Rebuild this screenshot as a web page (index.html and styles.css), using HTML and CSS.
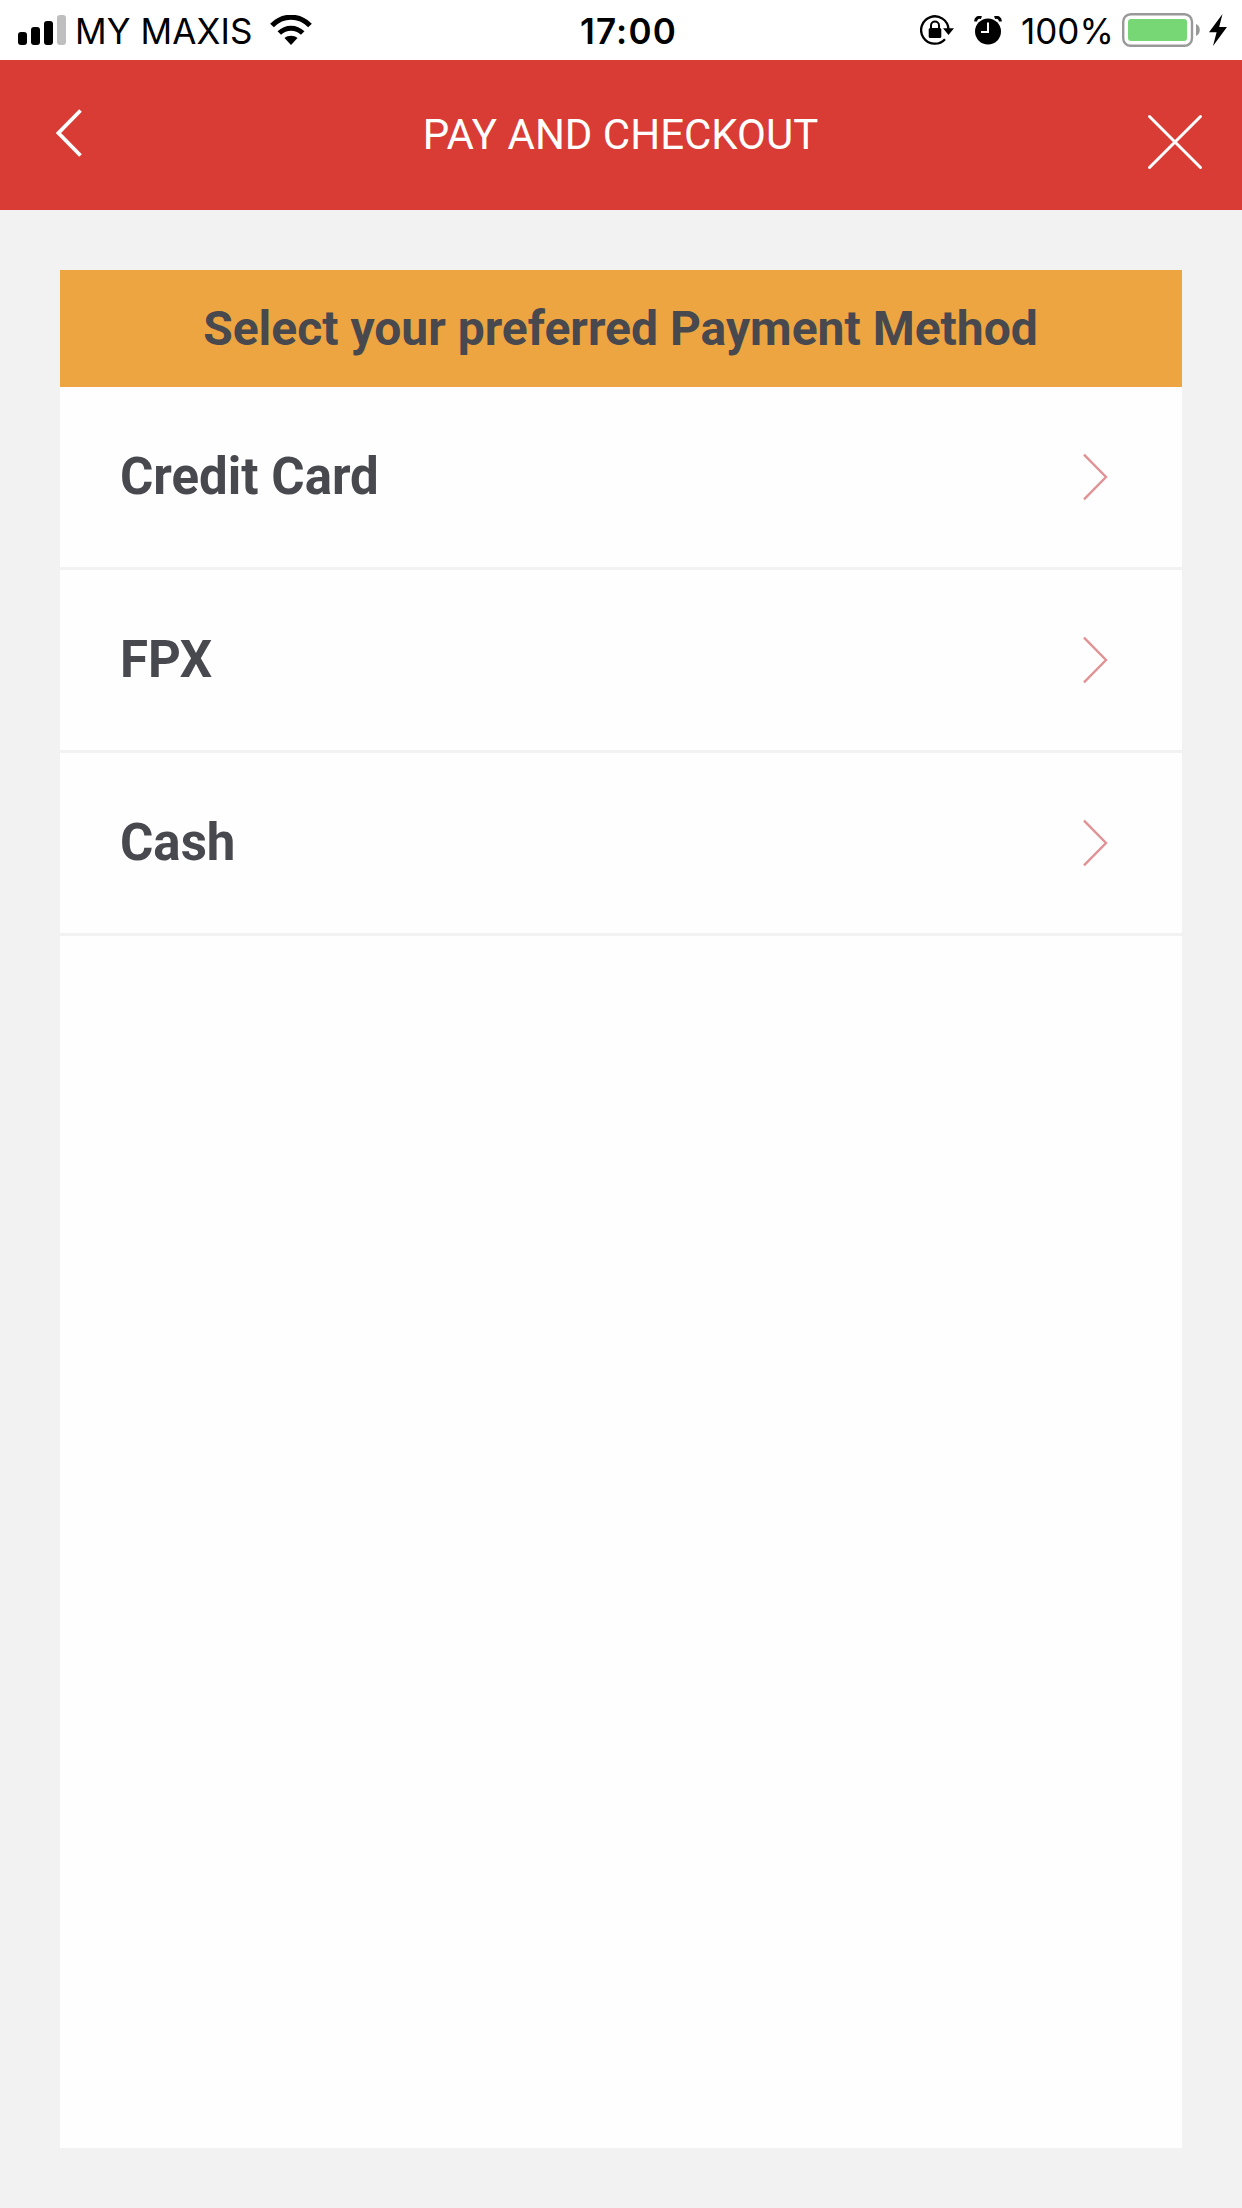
FILE: index.html
```html
<!DOCTYPE html>
<html lang="en">
<head>
  <meta charset="UTF-8" />
  <meta name="viewport" content="width=device-width, initial-scale=1.0"/>
  <title>Pay and Checkout</title>

  <link rel="stylesheet" href="styles.css">
</head>
<body>
  <div class="status-bar">
    <div class="status-left">
      <svg class="signal" width="48" height="30" viewBox="0 0 48 30">
        <rect x="0" y="17" width="9" height="13" rx="3"/>
        <rect x="13" y="12" width="9" height="18" rx="3"/>
        <rect x="26" y="6" width="9" height="24" rx="3"/>
        <rect x="39" y="0" width="9" height="30" rx="3" fill="#bfbfbf"/>
      </svg>
      <span class="carrier">MY MAXIS</span>
      <svg class="wifi" width="42" height="30" viewBox="0 0 42 30">
        <path d="M2 10.5 C13 -.5 29 -.5 40 10.5" fill="none" stroke="#000" stroke-width="5.2"/>
        <path d="M9.3 18 C16 11.5 26 11.5 32.7 18" fill="none" stroke="#000" stroke-width="5"/>
        <path d="M14.5 23 C18 20 24 20 27.5 23 L21 30 Z"/>
      </svg>
    </div>
    <span class="clock">17:00</span>
    <div class="status-right">
      <svg class="lock" width="34" height="30" viewBox="0 0 34 30">
        <path d="M28.5 14 A13.7 13.7 0 1 0 25 24.2" fill="none" stroke="#000" stroke-width="2.3"/>
        <path d="M23 13.3 H34 L28.5 20 Z"/>
        <rect x="8.7" y="13" width="12.6" height="10" rx="1.5"/>
        <path d="M11 14 V10.5 A4 4 0 0 1 19 10.5 V14" fill="none" stroke="#000" stroke-width="2"/>
      </svg>
      <svg class="alarm" width="28" height="29" viewBox="0 0 28 29">
        <circle cx="14" cy="15.5" r="13"/>
        <path d="M1.6 5.4 C1.6 2 4.5 .6 7.4 1.6" fill="none" stroke="#000" stroke-width="3"/>
        <path d="M26.4 5.4 C26.4 2 23.5 .6 20.6 1.6" fill="none" stroke="#000" stroke-width="3"/>
        <path d="M14 6.5 V16 H7" fill="none" stroke="#fff" stroke-width="2"/>
      </svg>
      <span class="percent">100%</span>
      <svg class="battery" width="78" height="34" viewBox="0 0 78 34">
        <rect x="1.2" y="1.2" width="68.8" height="31.6" rx="7.5" fill="#fff" stroke="#999" stroke-width="2.4"/>
        <rect x="6" y="6" width="59" height="22" rx="3" fill="#78d775"/>
        <path d="M74 11 C79 12.5 79 21.5 74 23 Z" fill="#999"/>
      </svg>
      <svg class="bolt" width="18" height="32" viewBox="0 0 18 32">
        <path d="M13.5 0 L0 18.3 H7.6 L4 32 L18 13 H10.2 Z"/>
      </svg>
    </div>
  </div>

  <div class="header">
    <svg class="back" width="26" height="50" viewBox="0 0 26 50">
      <path d="M24.5 2.5 L2.5 25 L24.5 47.5" fill="none" stroke="#fff" stroke-width="3.8"/>
    </svg>
    <h1 class="title">PAY AND CHECKOUT</h1>
    <svg class="close" width="56" height="56" viewBox="0 0 56 56">
      <path d="M2.5 2.5 L53.5 53.5 M53.5 2.5 L2.5 53.5" fill="none" stroke="#fff" stroke-width="3" stroke-linecap="round"/>
    </svg>
  </div>

  <div class="panel">
    <h2 class="banner">Select your preferred Payment Method</h2>
    <div class="method">
      <span>Credit Card</span>
      <svg width="26" height="48" viewBox="0 0 26 48">
        <path d="M2 1.7 L24 24 L2 46.3"/>
      </svg>
    </div>
    <div class="method">
      <span>FPX</span>
      <svg width="26" height="48" viewBox="0 0 26 48">
        <path d="M2 1.7 L24 24 L2 46.3"/>
      </svg>
    </div>
    <div class="method">
      <span>Cash</span>
      <svg width="26" height="48" viewBox="0 0 26 48">
        <path d="M2 1.7 L24 24 L2 46.3"/>
      </svg>
    </div>
  </div>
</body>
</html>
```

FILE: styles.css
```css
* {
  box-sizing: border-box;
  margin: 0;
  padding: 0;
}

body {
  display: flex;
  flex-direction: column;
  height: 100vh;
  background-color: #f2f2f2;
  font-family: Roboto, 'Liberation Sans', sans-serif;
}

svg {
  display: block;
  flex-shrink: 0;
}

/* status bar */
.status-bar {
  display: grid;
  grid-template-columns: 1fr auto 1fr;
  align-items: center;
  height: 60px;
  padding: 0 15px 0 18px;
  background-color: #fff;
  font-family: Inter, 'Liberation Sans', sans-serif;
  font-size: 35px;
  line-height: 56px;
  white-space: nowrap;
}

.status-left,
.status-right {
  display: flex;
  align-items: center;
  height: 60px;
}

.status-right {
  justify-content: flex-end;
}

.carrier {
  width: 195px;
  margin-left: 9px;
  padding-top: 2px;
  letter-spacing: 0.1px;
}

.clock {
  padding: 2px 0 0 12px;
  font-weight: 600;
  letter-spacing: 1.2px;
}

.alarm {
  margin-left: 20px;
}

.percent {
  width: 94px;
  margin: 0 7px 0 19px;
  padding-top: 2px;
}

.battery {
  margin-top: -1px;
}

.bolt {
  margin-left: 9px;
}

/* header */
.header {
  display: flex;
  justify-content: space-between;
  align-items: center;
  height: 150px;
  padding: 0 39px 0 56px;
  background-color: #d93b35;
}

.back {
  margin-right: 12px;
  margin-top: -4px;
}

.title {
  padding-bottom: 2px;
  color: #fff;
  font-size: 42px;
  font-weight: 400;
}

.close {
  margin-top: 13px;
}

/* payment methods */
.panel {
  flex: 1;
  margin: 60px;
  background-color: #fefefe;
  color: #48484f;
}

.banner {
  height: 117px;
  padding-right: 1px;
  background-color: #eda542;
  font-size: 48px;
  line-height: 117px;
  text-align: center;
}

.method {
  display: flex;
  justify-content: space-between;
  align-items: center;
  height: 183px;
  padding: 0 74px 0 60px;
  border-bottom: 3px solid #f2f2f2;
  font-size: 51px;
  font-weight: 700;
}

.method span {
  padding-bottom: 1px;
}

.method path {
  fill: none;
  stroke: #e09294;
  stroke-width: 2.4;
}
```
